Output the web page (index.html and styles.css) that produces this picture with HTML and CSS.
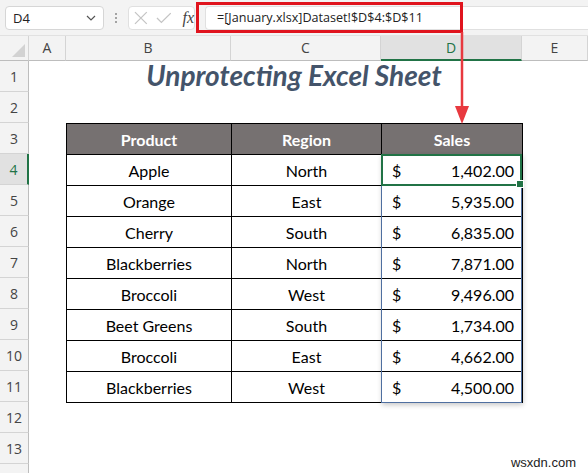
FILE: index.html
```html
<!DOCTYPE html>
<html lang="en">
<head>
    <meta charset="UTF-8">
    <meta name="viewport" content="width=device-width, initial-scale=1.0">
    <title>Unprotecting Excel Sheet</title>
    <link rel="stylesheet" href="styles.css">
</head>
<body>
    <div class="window">
        <div class="formula-bar">
            <div class="name-box">
                <span>D4</span>
                <svg class="chevron" width="10" height="6" viewBox="0 0 10 6"><path d="M1 1 L5 5 L9 1" fill="none" stroke="#555" stroke-width="1.2"/></svg>
            </div>
            <svg class="grip" width="4" height="12" viewBox="0 0 4 12"><circle cx="2" cy="2" r="1" fill="#888"/><circle cx="2" cy="6" r="1" fill="#888"/><circle cx="2" cy="10" r="1" fill="#888"/></svg>
            <div class="fx-box">
                <svg width="14" height="14" viewBox="0 0 14 14"><path d="M1 1 L13 13 M13 1 L1 13" stroke="#c4c4c4" stroke-width="1.3"/></svg>
                <svg width="16" height="12" viewBox="0 0 16 12"><path d="M1 6 L5.5 10.5 L15 1" fill="none" stroke="#c4c4c4" stroke-width="1.3"/></svg>
                <span class="fx">fx</span>
            </div>
            <div class="formula">=[January.xlsx]Dataset!$D$4:$D$11</div>
            <div class="callout"></div>
        </div>

        <div class="sheet">
            <div class="corner"></div>
            <div class="col-head">A</div>
            <div class="col-head">B</div>
            <div class="col-head">C</div>
            <div class="col-head active">D</div>
            <div class="col-head">E</div>

            <div class="row-head">1</div>
            <div class="title">Unprotecting Excel Sheet</div>
            <div class="row-head">2</div>
            <div class="row-head">3</div>
            <div class="row-head active">4</div>
            <div class="row-head">5</div>
            <div class="row-head">6</div>
            <div class="row-head">7</div>
            <div class="row-head">8</div>
            <div class="row-head">9</div>
            <div class="row-head">10</div>
            <div class="row-head">11</div>
            <div class="row-head">12</div>
            <div class="row-head">13</div>
            <div class="row-head"></div>

            <div class="table-wrap">
                <table class="data">
                    <colgroup><col class="c-product"><col class="c-region"><col class="c-sales"></colgroup>
                    <tr><th>Product</th><th>Region</th><th>Sales</th></tr>
                    <tr><td>Apple</td><td>North</td><td class="money"><span>$</span><span>1,402.00</span></td></tr>
                    <tr><td>Orange</td><td>East</td><td class="money"><span>$</span><span>5,935.00</span></td></tr>
                    <tr><td>Cherry</td><td>South</td><td class="money"><span>$</span><span>6,835.00</span></td></tr>
                    <tr><td>Blackberries</td><td>North</td><td class="money"><span>$</span><span>7,871.00</span></td></tr>
                    <tr><td>Broccoli</td><td>West</td><td class="money"><span>$</span><span>9,496.00</span></td></tr>
                    <tr><td>Beet Greens</td><td>South</td><td class="money"><span>$</span><span>1,734.00</span></td></tr>
                    <tr><td>Broccoli</td><td>East</td><td class="money"><span>$</span><span>4,662.00</span></td></tr>
                    <tr><td>Blackberries</td><td>West</td><td class="money"><span>$</span><span>4,500.00</span></td></tr>
                </table>
                <div class="ref-range"></div>
                <div class="active-cell"></div>
            </div>
        </div>

        <svg class="arrow" width="18" height="94" viewBox="0 0 18 94">
            <path d="M9 0 L9 78" stroke="#e8393f" stroke-width="2.5"/>
            <path d="M2 74 L16 74 L9 92 Z" fill="#e8393f"/>
        </svg>
        <div class="watermark">wsxdn.com</div>
    </div>
</body>
</html>
```

FILE: styles.css
```css
body {
    margin: 0;
    background: #fff;
    font-family: 'Lato', 'Open Sans', sans-serif;
    color: #000;
}
.window {
    position: relative;
    width: 588px;
    height: 473px;
    overflow: hidden;
    background: #fff;
}

/* formula bar */
.formula-bar {
    position: relative;
    height: 36px;
    box-sizing: border-box;
    background: #f3f3f3;
    border-bottom: 1px solid #e1e1e1;
    display: flex;
    align-items: flex-start;
    padding: 6px 0 0 5px;
}
.name-box {
    width: 99px;
    height: 24px;
    box-sizing: border-box;
    background: #fff;
    border: 1px solid #d6d6d6;
    border-radius: 4px;
    display: flex;
    align-items: center;
    justify-content: space-between;
    padding: 0 7px 0 7px;
    font-family: 'Open Sans', sans-serif;
    font-size: 13px;
    color: #222;
}
.grip { margin: 6px 10px 0 10px; }
.fx-box {
    width: 67px;
    height: 24px;
    box-sizing: border-box;
    background: #fff;
    border: 1px solid #e0e0e0;
    border-radius: 4px;
    display: flex;
    align-items: center;
    gap: 8px;
    padding-left: 5px;
}
.fx {
    font-family: 'Liberation Serif', serif;
    font-style: italic;
    font-size: 16px;
    color: #444;
    margin-left: 3px;
}
.formula {
    flex: 1;
    height: 24px;
    margin-left: 10px;
    box-sizing: border-box;
    background: #fff;
    border: 1px solid #e0e0e0;
    border-right: none;
    border-radius: 4px 0 0 4px;
    padding-left: 11px;
    line-height: 22px;
    font-family: 'Open Sans', sans-serif;
    font-size: 12.6px;
    color: #222;
}
.callout {
    position: absolute;
    left: 196px;
    top: 2px;
    width: 267px;
    height: 31px;
    box-sizing: border-box;
    border: 3px solid #e0141e;
}

/* sheet grid */
.sheet {
    display: grid;
    grid-template-columns: 29px 37px 165px 150px 141px 66px;
    grid-template-rows: 25px;
    grid-auto-rows: 31px;
}
.corner, .col-head {
    background: #f3f3f3;
    border-right: 1px solid #d4d4d4;
    border-bottom: 1px solid #bdbdbd;
    box-sizing: border-box;
}
.corner { position: relative; }
.corner::after {
    content: "";
    position: absolute;
    right: 3px;
    bottom: 3px;
    border-style: solid;
    border-width: 0 0 13px 13px;
    border-color: transparent transparent #d2d2d2 transparent;
}
.col-head {
    font-family: 'Open Sans', sans-serif;
    font-size: 14px;
    color: #444;
    text-align: center;
    line-height: 24px;
}
.col-head.active {
    background: #e1e1e1;
    color: #217346;
    border-bottom: 2px solid #217346;
}
.row-head {
    grid-column: 1;
    background: #f3f3f3;
    border-right: 1px solid #bdbdbd;
    border-bottom: 1px solid #d4d4d4;
    box-sizing: border-box;
    font-family: 'Open Sans', sans-serif;
    font-size: 14px;
    color: #444;
    text-align: center;
    line-height: 32px;
}
.row-head.active {
    background: #e1e1e1;
    color: #217346;
    border-right: 2px solid #217346;
}

.title {
    grid-column: 3 / span 3;
    grid-row: 2;
    text-align: center;
    font-weight: 700;
    font-style: italic;
    font-size: 28px;
    color: #44546a;
    line-height: 28px;
}

/* data table */
.table-wrap {
    grid-column: 3 / span 3;
    grid-row: 4 / span 9;
    position: relative;
}
.data {
    border-collapse: collapse;
    table-layout: fixed;
    width: 456px;
    font-size: 16px;
}
.c-product { width: 165px; }
.c-region { width: 150px; }
.c-sales { width: 141px; }
.data th, .data td {
    height: 31px;
    box-sizing: border-box;
    border: 1px solid #000;
    padding: 0;
    text-align: center;
}
.data th {
    background: #767171;
    color: #fff;
    font-weight: 700;
}
.data td.money {
    padding: 0 8px 0 10px;
}
.money span:first-child { float: left; }
.money span:last-child { float: right; }
.ref-range {
    position: absolute;
    left: 315px;
    top: 31px;
    width: 141px;
    height: 249px;
    box-sizing: border-box;
    border: 1px solid #4f6fa0;
    box-shadow: 1px 2px 5px rgba(0, 0, 0, 0.22);
}
.active-cell {
    position: absolute;
    left: 315px;
    top: 31px;
    width: 141px;
    height: 32px;
    box-sizing: border-box;
    border: 2px solid #217346;
}
.active-cell::after {
    content: "";
    position: absolute;
    right: -4px;
    bottom: -4px;
    width: 6px;
    height: 6px;
    background: #217346;
    border: 1px solid #fff;
}

.arrow {
    position: absolute;
    left: 453px;
    top: 32px;
}
.watermark {
    position: absolute;
    right: 12px;
    bottom: 3px;
    font-family: 'Liberation Sans', Arial, sans-serif;
    font-size: 13px;
    color: #222;
}
```
